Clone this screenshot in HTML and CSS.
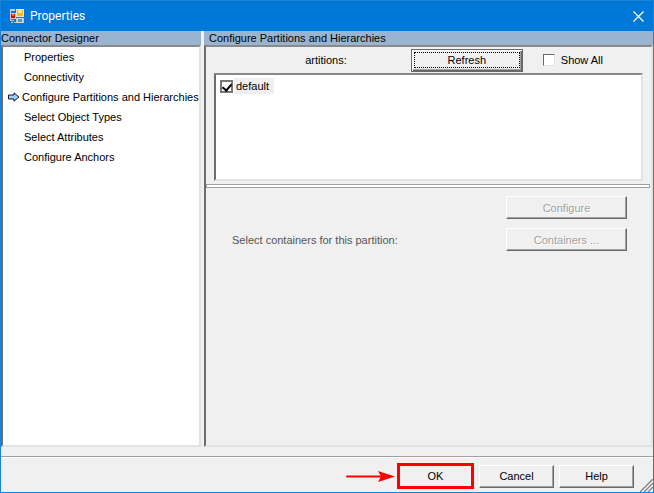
FILE: index.html
```
<!DOCTYPE html>
<html lang="en">

<head>
    <meta charset="UTF-8">
    <title>Properties</title>
    <link rel="stylesheet" href="styles.css">
</head>

<body>
    <div class="dialog">
        <header class="titlebar">
            <svg class="app-icon" width="14" height="14" viewBox="0 0 14 14" shape-rendering="crispEdges">
                <path fill="#b9cbe0" d="M0 0h5v2H0zM0 2h1v10H0zM0 11h4v1H0zM6 9h1v5H6zM13 9h1v5h-1zM1 13h2v1H1zM4 13h2v1H4z" />
                <path fill="#dfe6ee" d="M6 0h8v8H6z" />
                <path fill="#f8b91c" d="M7 1h6v6H7z" />
                <path fill="#ffe48a" d="M8 1h4v3H8z" />
                <path fill="#e8c4c4" d="M0 4h6v6H0z" />
                <path fill="#b3141c" d="M1 5h4v4H1z" />
                <path fill="#e5636a" d="M2 5h2v2H2z" />
                <path fill="#cfdcf0" d="M7 9h6v5H7z" />
                <path fill="#5b8ee0" d="M8 10h4v3H8z" />
            </svg>
            <h1>Properties</h1>
            <button class="close" type="button" aria-label="Close">
                <svg width="11" height="11" viewBox="0 0 11 11">
                    <path d="M.5 .5l10 10M10.500 .5l-10 10" stroke="#fff" stroke-width="1.200" fill="none" />
                </svg>
            </button>
        </header>

        <div class="main">
            <nav class="column steps">
                <h2>Connector Designer</h2>
                <ul class="sunken">
                    <li><a href="#">Properties</a></li>
                    <li><a href="#">Connectivity</a></li>
                    <li class="current">
                        <svg class="arrow" width="12" height="10" viewBox="0 0 12 10">
                            <path d="M.5 3h5.500V.8L11 5 6 9.200V7H.5z" fill="#9fd0f5" stroke="#10183c" />
                        </svg>
                        <a href="#">Configure Partitions and Hierarchies</a>
                    </li>
                    <li><a href="#">Select Object Types</a></li>
                    <li><a href="#">Select Attributes</a></li>
                    <li><a href="#">Configure Anchors</a></li>
                </ul>
            </nav>

            <section class="column content">
                <h2>Configure Partitions and Hierarchies</h2>
                <div class="panel sunken">
                    <div class="toolbar">
                        <span class="caption">artitions:</span>
                        <button class="btn refresh" type="button"><span>Refresh</span></button>
                        <label class="check"><input type="checkbox">Show All</label>
                    </div>
                    <div class="list sunken">
                        <label class="item"><input type="checkbox" checked><span>default</span></label>
                    </div>
                    <div class="splitter"></div>
                    <div class="options">
                        <button class="btn" type="button" disabled>Configure</button>
                        <span>Select containers for this partition:</span>
                        <button class="btn" type="button" disabled>Containers ...</button>
                    </div>
                </div>
            </section>
        </div>

        <footer class="footer">
            <svg class="pointer" width="51" height="13" viewBox="0 0 51 13">
                <path d="M1 6.500h34" stroke="#f00" stroke-width="2" stroke-linecap="round" />
                <path d="M32 1l17 5.500L32 12l3-5.500z" fill="#f00" />
            </svg>
            <button class="btn ok" type="button">OK</button>
            <button class="btn" type="button">Cancel</button>
            <button class="btn" type="button">Help</button>
            <svg class="grip" width="13" height="13" viewBox="0 0 13 13">
                <path d="M0 13L13 0M4 13l9-9M8 13l5-5" stroke="#8a8a8a" stroke-width="1.500" />
                <path d="M2 13L13 2M6 13l7-7M10 13l3-3" stroke="#fff" />
            </svg>
        </footer>
    </div>
</body>

</html>
```
FILE: styles.css
```
* {
    box-sizing: border-box;
}

body,
h1,
h2,
ul {
    margin: 0;
    padding: 0;
}

body,
button {
    font: 11px/14px "Liberation Sans", Arial, sans-serif;
    color: #000;
}

.dialog {
    display: flex;
    flex-direction: column;
    min-height: 100vh;
    border: 1px solid #1883d7;
    background: #f0f0f0;
}

/* title bar */
.titlebar {
    display: flex;
    align-items: center;
    gap: 6px;
    height: 30px;
    padding: 0 9px;
    background: #0078d7;
}

.titlebar h1 {
    flex: 1;
    font: 12px/14px Roboto, sans-serif;
    color: #fff;
}

.close {
    display: flex;
    padding: 0;
    border: 0;
    background: none;
}

/* two columns */
.main {
    flex: 1;
    display: grid;
    grid-template-columns: 200px 1fr;
    gap: 3px;
}

.column {
    display: flex;
    flex-direction: column;
    min-width: 0;
}

.column h2 {
    height: 14px;
    font-size: 11px;
    font-weight: normal;
    white-space: nowrap;
    background: #99b4d1;
}

.content h2 {
    padding-left: 5px;
}

.sunken {
    border: 2px solid;
    border-color: #8a8a8a #e3e3e3 #e3e3e3 #6d6d6d;
}

.steps ul {
    flex: 1;
    list-style: none;
    background: #fff;
}

.steps li {
    display: flex;
    align-items: center;
    height: 20px;
    padding-left: 21px;
    white-space: nowrap;
}

.steps .current {
    gap: 2px;
    padding-left: 5px;
}

.arrow {
    flex: none;
}

.steps a {
    color: #000;
    text-decoration: none;
}

.panel {
    flex: 1;
    display: flex;
    flex-direction: column;
}

/* buttons */
.btn {
    width: 75px;
    height: 23px;
    padding: 0;
    border: 1px solid;
    border-color: #fff #696969 #696969 #fff;
    box-shadow: inset -1px -1px #a0a0a0;
    background: #f0f0f0;
}

.btn:disabled {
    color: #a0a0a0;
    text-shadow: 1px 1px #fff;
}

.toolbar {
    display: flex;
    align-items: center;
    justify-content: flex-end;
    height: 26px;
    padding-right: 48px;
}

.caption {
    margin-right: 64px;
}

.refresh {
    width: 112px;
    margin-right: 20px;
    padding: 2px;
    border: 1px solid #696969;
    box-shadow: inset 1px 1px #fff, inset -1px -1px #696969, inset -2px -2px #a0a0a0;
}

.refresh span {
    display: block;
    border: 1px dotted #000;
}

.check,
.item {
    display: flex;
    align-items: center;
    gap: 6px;
}

input[type="checkbox"] {
    appearance: none;
    width: 12px;
    height: 12px;
    margin: 0;
    border: 1px solid;
    border-color: #696969 #e3e3e3 #e3e3e3 #696969;
    background: #fff;
}

/* tick is two sides of a turned box */
input[type="checkbox"]:checked::before {
    content: "";
    display: block;
    width: 4px;
    height: 7px;
    margin: 0 auto;
    border: solid #000;
    border-width: 0 2px 2px 0;
    transform: rotate(40deg);
}

.list {
    height: 108px;
    margin: 0 8px;
    padding: 3px 4px;
    background: #fff;
}

.item {
    gap: 1px;
}

.item input {
    width: 13px;
    height: 13px;
    border: 2px solid #777;
}

.item span {
    padding: 1px 5px 1px 2px;
    background: #f0f0f0;
}

.splitter {
    height: 4px;
    margin: 3px 1px 0 0;
    border: 1px solid #a0a0a0;
    background: #fff;
}

.options {
    display: grid;
    grid-template-columns: 1fr 121px;
    align-items: center;
    row-gap: 9px;
    padding: 8px 24px 8px 26px;
    color: #555;
}

.options .btn {
    grid-column: 2;
    width: 100%;
}

/* bottom row */
.footer {
    position: relative;
    display: flex;
    align-items: center;
    justify-content: flex-end;
    gap: 5px;
    height: 36px;
    margin-top: 9px;
    padding-right: 19px;
    padding-top: 3px;
    border-top: 1px solid #a0a0a0;
    box-shadow: inset 0 1px #fff;
}

.ok {
    width: 77px;
    height: 26px;
    border: 3px solid #f00;
    box-shadow: none;
}

.pointer {
    margin-right: -5px;
}

.grip {
    position: absolute;
    right: 0;
    bottom: 0;
}
```
